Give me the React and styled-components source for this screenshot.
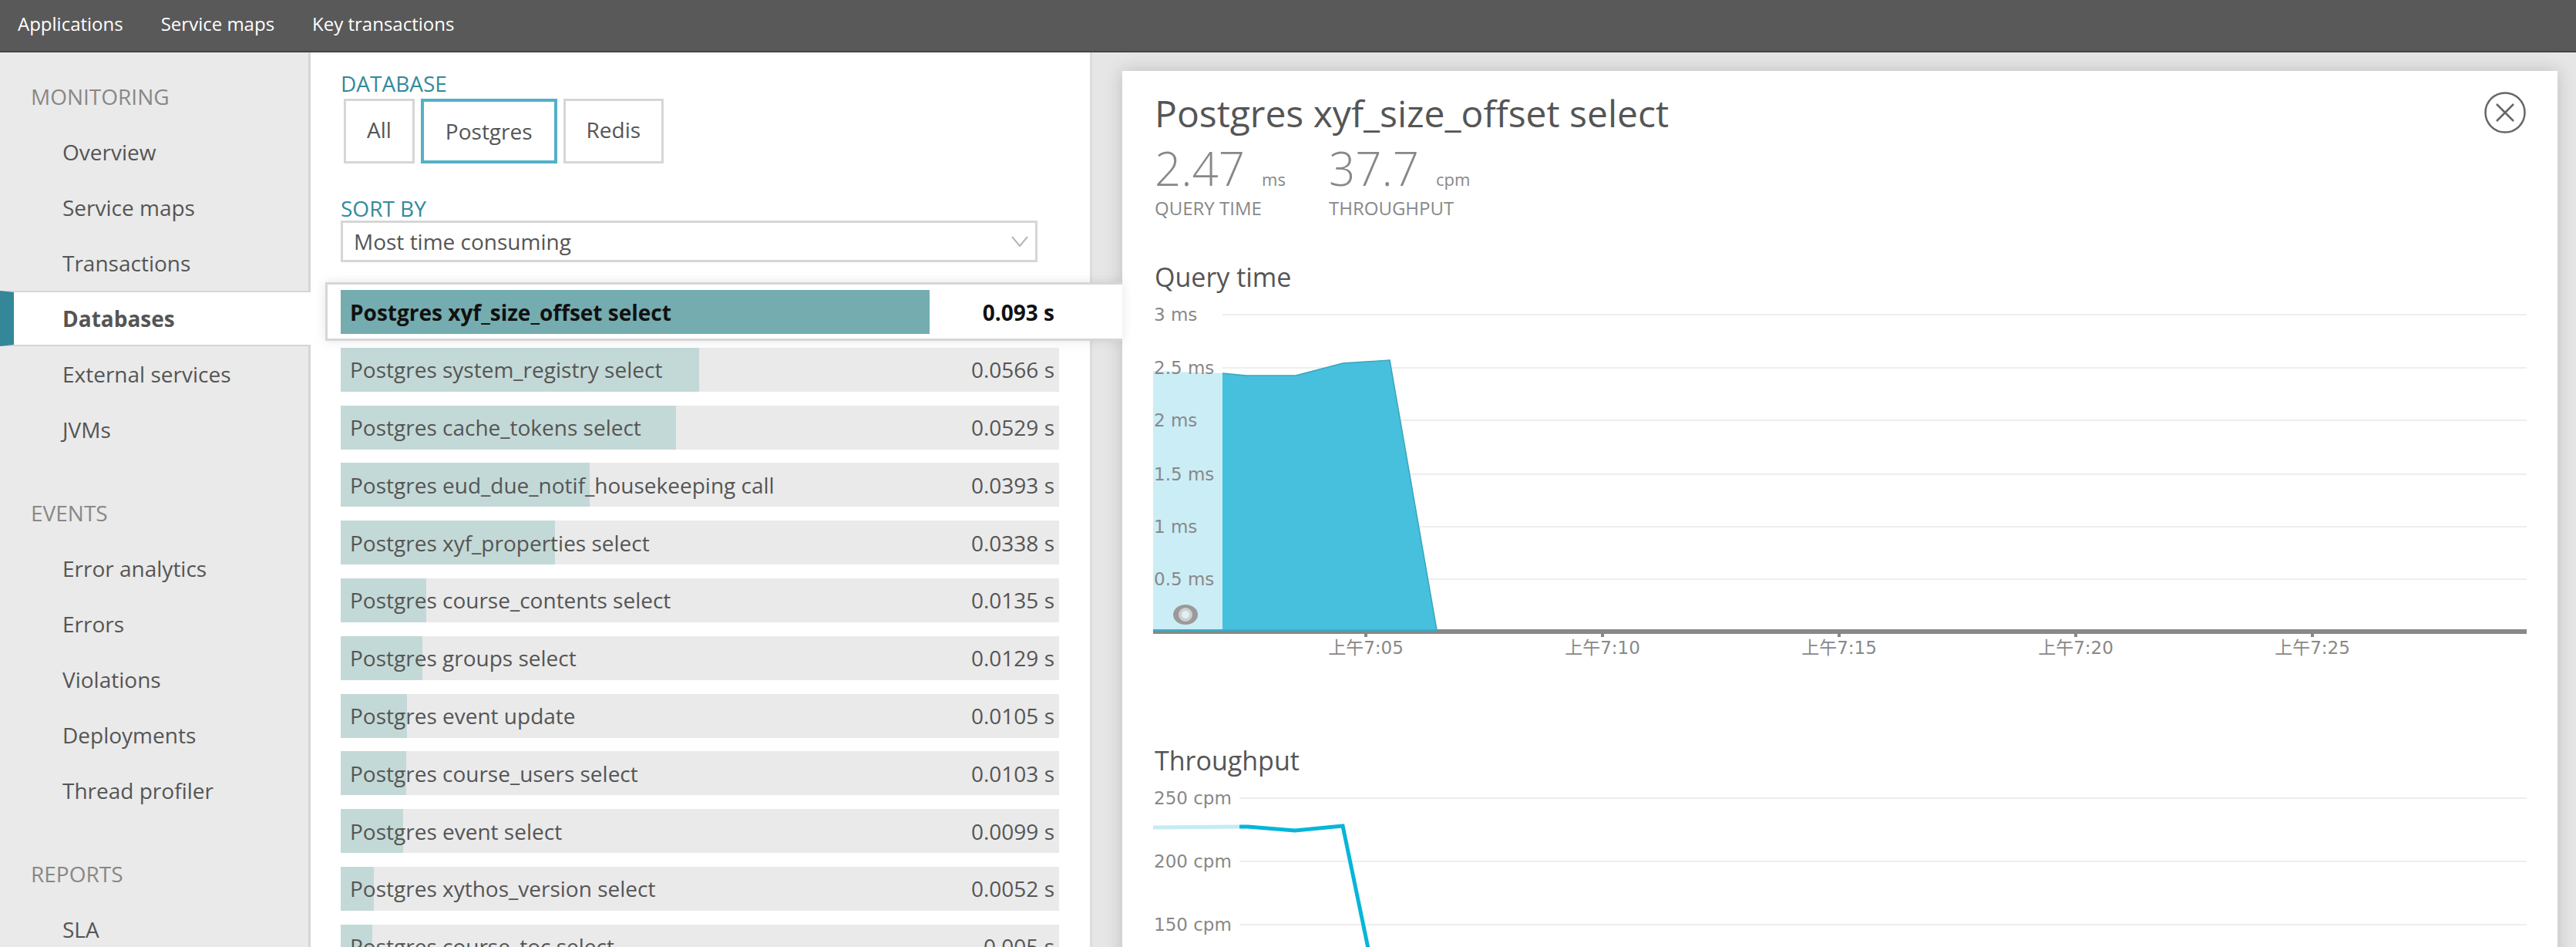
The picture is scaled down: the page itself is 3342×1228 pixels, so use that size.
import React from "react"
import styled, { createGlobalStyle } from "styled-components"

const GlobalStyle = createGlobalStyle`
  html, body {
    margin: 0;
    padding: 0;
    background: #fff;
  }
  * {
    box-sizing: border-box;
  }
`

const Page = styled.div`
  width: 3342px;
  height: 1228px;
  overflow: hidden;
  display: flex;
  flex-direction: column;
  font-family: "Open Sans", "Noto Sans", sans-serif;
  color: #555;
`

const TopBar = styled.nav`
  height: 68px;
  flex: none;
  display: flex;
  align-items: center;
  gap: 49px;
  padding: 0 0 6px 23px;
  background: #595959;
  border-bottom: 2px solid #444;
`

const TopLink = styled.a`
  color: #fff;
  font-size: 24px;
`

const Shell = styled.div`
  flex: 1;
  display: flex;
  min-height: 0;
`

const Sidebar = styled.aside`
  width: 403px;
  flex: none;
  padding-top: 21px;
  background: #eaeaea;
  border-right: 3px solid #d6d6d6;
`

const SideGroup = styled.div`
  margin-bottom: 36px;
`

const SideTitle = styled.div`
  height: 72px;
  line-height: 72px;
  padding-left: 40px;
  font-size: 28px;
  color: #888;
`

const SideItem = styled.div`
  height: 72px;
  line-height: ${(p) => (p.$active ? "68px" : "72px")};
  padding-left: ${(p) => (p.$active ? "63px" : "81px")};
  font-size: 28px;
  font-weight: ${(p) => (p.$active ? 700 : 400)};
  ${(p) =>
    p.$active &&
    `
    background: #fff;
    margin-right: -3px;
    border-top: 2px solid #d6d6d6;
    border-bottom: 2px solid #d6d6d6;
    border-left: 18px solid #338799;
  `}
`

const Main = styled.main`
  width: 1014px;
  flex: none;
  padding: 24px 40px 0 39px;
  background: #fff;
  border-right: 3px solid #dcdcdc;
`

const FieldLabel = styled.div`
  height: 32px;
  line-height: 32px;
  font-size: 28px;
  color: #338a9c;
`

const ButtonRow = styled.div`
  display: flex;
  gap: 8px;
  margin: 4px 0 42px 4px;
`

const FilterButton = styled.div`
  height: 84px;
  display: flex;
  align-items: center;
  padding: ${(p) => (p.$active ? "0 28px" : "0 27px 4px")};
  font-size: 28px;
  background: #fff;
  border: ${(p) => (p.$active ? "4px solid #52b1c7" : "3px solid #d6d6d6")};
`

const SelectBox = styled.div`
  width: 904px;
  height: 54px;
  display: flex;
  align-items: center;
  justify-content: space-between;
  padding: 0 9px 0 14px;
  margin-bottom: 36px;
  font-size: 28px;
  border: 3px solid #d6d6d6;
`

const RowList = styled.div`
  display: flex;
  flex-direction: column;
  gap: 17.8px;
`

const Row = styled.div`
  position: relative;
  height: 57px;
  width: 932px;
  flex: none;
  display: flex;
  align-items: center;
  justify-content: space-between;
  padding: 0 6px 0 12px;
  font-size: 28px;
  background: ${(p) => (p.$selected ? "transparent" : "#eaeaea")};
  color: ${(p) => (p.$selected ? "#111" : "#555")};
  font-weight: ${(p) => (p.$selected ? 700 : 400)};
  z-index: ${(p) => (p.$selected ? 2 : "auto")};

  ${(p) =>
    p.$selected &&
    `
    &::before {
      content: "";
      position: absolute;
      z-index: -2;
      top: -10px;
      bottom: -9px;
      left: -20px;
      right: -82px;
      background: #fff;
      border: 3px solid #d6d6d6;
      border-right: 0;
      box-shadow: 0 0 14px rgba(0, 0, 0, 0.1);
    }
  `}
`

const RowFill = styled.div`
  position: absolute;
  top: 0;
  bottom: 0;
  left: 0;
  background: ${(p) => (p.$selected ? "#74acb0" : "#c3d9d7")};
`

const RowText = styled.span`
  position: relative;
  white-space: nowrap;
`

const DetailPane = styled.section`
  flex: 1;
  min-width: 0;
  padding: 24px 24px 0 39px;
  background: #e6e6e6;
`

const Panel = styled.div`
  position: relative;
  height: 1200px;
  padding: 25px 40px 0 42px;
  background: #fff;
  box-shadow: 0 0 22px rgba(0, 0, 0, 0.18);
`

const CloseButton = styled.div`
  position: absolute;
  top: 27px;
  right: 41px;
  width: 54px;
  height: 54px;
`

const PanelTitle = styled.h1`
  margin: 0;
  height: 60px;
  line-height: 60px;
  font-size: 48px;
  font-weight: 400;
  color: #555;
`

const Stats = styled.div`
  display: flex;
  gap: 60px;
  margin-top: 5px;
`

const Stat = styled.div`
  width: 166px;
`

const StatValue = styled.div`
  height: 72px;
  line-height: 72px;
  font-size: 60px;
  font-weight: 300;
  color: #888;
  white-space: nowrap;
`

const StatUnit = styled.span`
  margin-left: 22px;
  font-size: 22px;
  font-weight: 400;
`

const StatLabel = styled.div`
  margin-top: 2px;
  line-height: 28px;
  font-size: 24px;
  color: #888;
  white-space: nowrap;
`

const ChartTitle = styled.h2`
  margin: ${(p) => p.$top}px 0 13px;
  height: 40px;
  line-height: 40px;
  font-size: 34px;
  font-weight: 400;
  color: #555;
`

const ChartFrame = styled.svg`
  display: block;
  margin-left: -2px;
  font-family: "DejaVu Sans", "Noto Sans CJK SC", sans-serif;
  font-size: 23px;
`

const sideGroups = [
  {
    title: "MONITORING",
    items: ["Overview", "Service maps", "Transactions", "Databases", "External services", "JVMs"],
  },
  {
    title: "EVENTS",
    items: ["Error analytics", "Errors", "Violations", "Deployments", "Thread profiler"],
  },
  { title: "REPORTS", items: ["SLA"] },
]

const rows = [
  ["Postgres xyf_size_offset select", 0.093, "0.093 s"],
  ["Postgres system_registry select", 0.0566, "0.0566 s"],
  ["Postgres cache_tokens select", 0.0529, "0.0529 s"],
  ["Postgres eud_due_notif_housekeeping call", 0.0393, "0.0393 s"],
  ["Postgres xyf_properties select", 0.0338, "0.0338 s"],
  ["Postgres course_contents select", 0.0135, "0.0135 s"],
  ["Postgres groups select", 0.0129, "0.0129 s"],
  ["Postgres event update", 0.0105, "0.0105 s"],
  ["Postgres course_users select", 0.0103, "0.0103 s"],
  ["Postgres event select", 0.0099, "0.0099 s"],
  ["Postgres xythos_version select", 0.0052, "0.0052 s"],
  ["Postgres course_toc select", 0.005, "0.005 s"],
]

const timeTicks = [
  [276, "上午7:05"],
  [583, "上午7:10"],
  [890, "上午7:15"],
  [1197, "上午7:20"],
  [1504, "上午7:25"],
]

const QueryChart = () => {
  const grid = [
    [16, "3 ms"],
    [85, "2.5 ms"],
    [153, "2 ms"],
    [223, "1.5 ms"],
    [291, "1 ms"],
    [359, "0.5 ms"],
  ]
  return (
    <ChartFrame width="1784" height="470" viewBox="0 0 1784 470">
      {grid.map(([y, label]) => (
        <line key={label} x1="90" x2="1782" y1={y} y2={y} stroke="#eee" strokeWidth="2" />
      ))}
      <polygon points="0,89 90,92 90,425 0,425" fill="#46c0dd" fillOpacity="0.28" />
      <polygon
        points="90,92 121,95 185,95 246,79 307,75 368,425 90,425"
        fill="#46c0dd"
      />
      <polyline
        points="90,92 121,95 185,95 246,79 307,75 368,425"
        fill="none"
        stroke="#3aa5bd"
        strokeWidth="1.5"
      />
      {grid.map(([y, label]) => (
        <text key={label} x="1" y={y + 8} fill="#888">
          {label}
        </text>
      ))}
      <ellipse cx="42" cy="405" rx="16" ry="13" fill="#9a9a9a" />
      <ellipse cx="42" cy="405" rx="9" ry="9" fill="#cfcfcf" />
      <circle cx="42" cy="405" r="5" fill="#dff1f5" />
      <rect x="0" y="424" width="1782" height="6" fill="#888" />
      <rect x="0" y="424" width="368" height="2" fill="#2fb1cd" />
      {timeTicks.map(([x, label]) => (
        <g key={label}>
          <rect x={x - 2} y="430" width="4" height="4" fill="#888" />
          <text x={x} y="456" textAnchor="middle" fill="#888">
            {label}
          </text>
        </g>
      ))}
    </ChartFrame>
  )
}

const ThroughputChart = () => {
  const grid = [
    [16, "250 cpm"],
    [98, "200 cpm"],
    [180, "150 cpm"],
  ]
  return (
    <ChartFrame width="1784" height="230" viewBox="0 0 1784 230">
      {grid.map(([y, label]) => (
        <g key={label}>
          <line x1="112" x2="1782" y1={y} y2={y} stroke="#eee" strokeWidth="2" />
          <text x="1" y={y + 8} fill="#888">
            {label}
          </text>
        </g>
      ))}
      <polyline points="0,54 112,53" fill="none" stroke="#c5ebf3" strokeWidth="5" />
      <polyline
        points="112,53 123,53 184,58 246,52 283,230"
        fill="none"
        stroke="#06b6d8"
        strokeWidth="5"
      />
    </ChartFrame>
  )
}

const App = () => {
  return (
    <Page>
      <GlobalStyle />
      <TopBar>
        <TopLink>Applications</TopLink>
        <TopLink>Service maps</TopLink>
        <TopLink>Key transactions</TopLink>
      </TopBar>
      <Shell>
        <Sidebar>
          {sideGroups.map((group) => (
            <SideGroup key={group.title}>
              <SideTitle>{group.title}</SideTitle>
              {group.items.map((item) => (
                <SideItem key={item} $active={item === "Databases"}>
                  {item}
                </SideItem>
              ))}
            </SideGroup>
          ))}
        </Sidebar>
        <Main>
          <FieldLabel>DATABASE</FieldLabel>
          <ButtonRow>
            <FilterButton>All</FilterButton>
            <FilterButton $active>Postgres</FilterButton>
            <FilterButton>Redis</FilterButton>
          </ButtonRow>
          <FieldLabel>SORT BY</FieldLabel>
          <SelectBox>
            Most time consuming
            <svg width="22" height="14" viewBox="0 0 22 14">
              <polyline points="1,1 11,13 21,1" fill="none" stroke="#b5b5b5" strokeWidth="2" />
            </svg>
          </SelectBox>
          <RowList>
            {rows.map(([name, value, label], index) => (
              <Row key={name} $selected={index === 0}>
                <RowFill
                  $selected={index === 0}
                  style={{ width: `${(value / 0.093) * 764}px` }}
                />
                <RowText>{name}</RowText>
                <RowText>{label}</RowText>
              </Row>
            ))}
          </RowList>
        </Main>
        <DetailPane>
          <Panel>
            <CloseButton>
              <svg width="54" height="54" viewBox="0 0 54 54">
                <circle cx="27" cy="27" r="25.5" fill="none" stroke="#666" strokeWidth="2.5" />
                <path d="M16 16 L38 38 M38 16 L16 38" stroke="#666" strokeWidth="2.5" />
              </svg>
            </CloseButton>
            <PanelTitle>Postgres xyf_size_offset select</PanelTitle>
            <Stats>
              <Stat>
                <StatValue>
                  2.47<StatUnit>ms</StatUnit>
                </StatValue>
                <StatLabel>QUERY TIME</StatLabel>
              </Stat>
              <Stat>
                <StatValue>
                  37.7<StatUnit>cpm</StatUnit>
                </StatValue>
                <StatLabel>THROUGHPUT</StatLabel>
              </Stat>
            </Stats>
            <ChartTitle $top={55}>Query time</ChartTitle>
            <QueryChart />
            <ChartTitle $top={104}>Throughput</ChartTitle>
            <ThroughputChart />
          </Panel>
        </DetailPane>
      </Shell>
    </Page>
  )
}

export default App
